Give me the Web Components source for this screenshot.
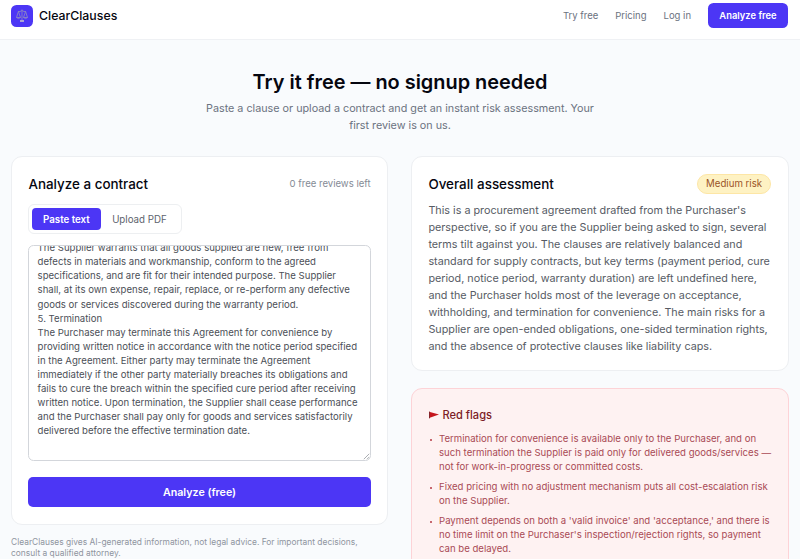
<!DOCTYPE html>
<html lang="en">
<head>
<meta charset="utf-8">
<title>ClearClauses</title>
<style>
  body {
    margin: 0;
    height: 559px;
    overflow: hidden;
    background: #f9fbfd;
    color: #05060f;
    font-family: Inter, 'Liberation Sans', sans-serif;
    --brand: #4c36f5;
    --muted: #6b7280;
  }

  main {
    box-sizing: border-box;
    height: 519px;
    overflow: hidden;
    padding: 30px 11px 0;
  }

  .columns {
    display: grid;
    grid-template-columns: 377px 378px;
    gap: 23px;
    align-items: start;
    margin-top: 22px;
  }

  .column {
    display: grid;
    gap: 17px;
  }
</style>
</head>
<body>
<site-header>
  <nav-link>Try free</nav-link>
  <nav-link>Pricing</nav-link>
  <nav-link>Log in</nav-link>
</site-header>

<main>
  <page-hero>
    Try it free — no signup needed
    <span slot="lead">Paste a clause or upload a contract and get an instant risk assessment. Your<br>first review is on us.</span>
  </page-hero>

  <div class="columns">
    <div>
      <panel-card>
        <span slot="title">Analyze a contract</span>
        <span slot="aside">0 free reviews left</span>
        <contract-form>The Supplier warrants that all goods supplied are new, free from
defects in materials and workmanship, conform to the agreed
specifications, and are fit for their intended purpose. The Supplier
shall, at its own expense, repair, replace, or re-perform any defective
goods or services discovered during the warranty period.
5. Termination
The Purchaser may terminate this Agreement for convenience by
providing written notice in accordance with the notice period specified
in the Agreement. Either party may terminate the Agreement
immediately if the other party materially breaches its obligations and
fails to cure the breach within the specified cure period after receiving
written notice. Upon termination, the Supplier shall cease performance
and the Purchaser shall pay only for goods and services satisfactorily
delivered before the effective termination date.</contract-form>
      </panel-card>
      <legal-note>ClearClauses gives AI-generated information, not legal advice. For important decisions,<br>consult a qualified attorney.</legal-note>
    </div>

    <div class="column">
      <panel-card>
        <span slot="title">Overall assessment</span>
        <risk-badge slot="aside">Medium risk</risk-badge>
        <assessment-text>This is a procurement agreement drafted from the Purchaser's
perspective, so if you are the Supplier being asked to sign, several
terms tilt against you. The clauses are relatively balanced and
standard for supply contracts, but key terms (payment period, cure
period, notice period, warranty duration) are left undefined here,
and the Purchaser holds most of the leverage on acceptance,
withholding, and termination for convenience. The main risks for a
Supplier are open-ended obligations, one-sided termination rights,
and the absence of protective clauses like liability caps.</assessment-text>
      </panel-card>
      <red-flags>
        <flag-item>Termination for convenience is available only to the Purchaser, and on<br>such termination the Supplier is paid only for delivered goods/services —<br>not for work-in-progress or committed costs.</flag-item>
        <flag-item>Fixed pricing with no adjustment mechanism puts all cost-escalation risk<br>on the Supplier.</flag-item>
        <flag-item>Payment depends on both a 'valid invoice' and 'acceptance,' and there is<br>no time limit on the Purchaser's inspection/rejection rights, so payment<br>can be delayed.</flag-item>
      </red-flags>
    </div>
  </div>
</main>

<script>
  // every element only needs a shadow root filled from its markup
  function define(name, markup) {
    const template = document.createElement('template');
    template.innerHTML = markup;

    customElements.define(name, class extends HTMLElement {
      constructor() {
        super();
        this.attachShadow({ mode: 'open' }).appendChild(template.content.cloneNode(true));
      }
    });
  }

  define('brand-logo', `
    <style>
      :host {
        display: flex;
        align-items: center;
        gap: 6px;
        font-size: 12.32px;
        font-weight: 500;
      }
      .mark {
        display: grid;
        place-items: center;
        width: 22px;
        height: 22px;
        border-radius: 5.5px;
        background: var(--brand);
      }
    </style>
    <span class="mark">
      <svg width="14" height="16" viewBox="0 0 14 16" fill="none" stroke="#8a84c4" stroke-width=".9">
        <path d="M3 3.5q2 .6 4-1 2 1.6 4 1M7 1.5v11M3.4 3.5L1.5 9.5h4L3.4 3.5M10.6 3.5L8.5 9.5h4l-1.9-6"/>
        <path d="M1.5 9.5q2 2.2 4 0M8.5 9.5q2 2.2 4 0"/>
        <path d="M5 13h4" stroke="#c9c7c9" stroke-width="1.5"/>
      </svg>
    </span>
    <span>ClearClauses</span>
  `);

  define('nav-link', `
    <style>
      :host {
        color: var(--muted);
        font-size: 9.5px;
      }
    </style>
    <slot></slot>
  `);

  define('site-header', `
    <style>
      :host {
        display: flex;
        align-items: center;
        justify-content: space-between;
        box-sizing: border-box;
        height: 40px;
        padding: 0 12px 8px 11px;
        border-bottom: 1px solid #eff1f4;
        background: #fff;
      }
      nav {
        display: flex;
        align-items: center;
        gap: 17px;
      }
      button {
        height: 25px;
        width: 80px;
        padding: 0;
        border: 0;
        border-radius: 5.5px;
        background: var(--brand);
        color: #fff;
        font: 600 9.4px Inter, sans-serif;
      }
    </style>
    <brand-logo></brand-logo>
    <nav>
      <slot></slot>
      <button>Analyze free</button>
    </nav>
  `);

  define('page-hero', `
    <style>
      :host {
        display: block;
        text-align: center;
      }
      h1 {
        margin: 0;
        font-size: 19.92px;
        font-weight: 600;
        line-height: 24px;
      }
      p {
        margin: 6px 0 0;
        color: var(--muted);
        font-size: 10.77px;
        line-height: 17px;
      }
    </style>
    <h1><slot></slot></h1>
    <p><slot name="lead"></slot></p>
  `);

  define('panel-card', `
    <style>
      :host {
        display: block;
        padding: 16px 16.4px;
        border: 1px solid #edeff2;
        border-radius: 11px;
        background: #fff;
      }
      header {
        display: flex;
        align-items: center;
        justify-content: space-between;
        height: 21px;
      }
      h2 {
        margin: 0;
        font-size: 13.42px;
        font-weight: 500;
      }
      .aside {
        color: #858b96;
        font-size: 9.55px;
      }
    </style>
    <header>
      <h2><slot name="title"></slot></h2>
      <div class="aside"><slot name="aside"></slot></div>
    </header>
    <slot></slot>
  `);

  define('tab-switch', `
    <style>
      :host {
        display: flex;
        box-sizing: border-box;
        width: 153.6px;
        height: 30px;
        padding: 3px 2.5px;
        border: 1px solid #edeff1;
        border-radius: 6px;
      }
      button {
        padding: 0;
        width: 69px;
        border: 0;
        border-radius: 4px;
        background: none;
        color: #5d636d;
        font: 400 9.71px Inter, sans-serif;
      }
      .active {
        background: var(--brand);
        color: #fff;
        font-weight: 600;
      }
      .second {
        width: 77px;
      }
    </style>
    <button class="active">Paste text</button>
    <button class="second">Upload PDF</button>
  `);

  define('contract-form', `
    <style>
      :host {
        display: block;
        padding: 10px 0 .5px;
      }
      /* scrolled to its end, so the text hangs from the bottom edge */
      .field {
        position: relative;
        display: flex;
        flex-direction: column;
        justify-content: flex-end;
        box-sizing: border-box;
        height: 216px;
        margin-top: 11px;
        padding: 0 8.2px 21.5px;
        overflow: hidden;
        border: 1px solid #d3d6db;
        border-radius: 5.5px;
        color: #4b4f57;
        font-size: 9.61px;
        line-height: 14.1px;
        white-space: pre;
      }
      .grip {
        position: absolute;
        right: 0;
        bottom: 0;
      }
      .submit {
        display: block;
        width: 100%;
        height: 30.4px;
        margin: 16px 0 0;
        border: 0;
        border-radius: 5px;
        background: var(--brand);
        color: #fff;
        font: 600 10.7px Inter, sans-serif;
      }
    </style>
    <tab-switch></tab-switch>
    <div class="field">
      <div><slot></slot></div>
      <svg class="grip" width="7" height="7" viewBox="0 0 7 7" stroke="#85898f" stroke-width=".7">
        <path d="M.8 6.2L6.2.8M4 6.2L6.2 4"/>
      </svg>
    </div>
    <button class="submit">Analyze (free)</button>
  `);

  define('legal-note', `
    <style>
      :host {
        display: block;
        margin-top: 12.3px;
        color: #8f959f;
        font-size: 8.41px;
        line-height: 11.2px;
      }
    </style>
    <slot></slot>
  `);

  define('risk-badge', `
    <style>
      :host {
        display: grid;
        place-items: center;
        box-sizing: border-box;
        width: 74px;
        height: 20px;
        margin-right: .5px;
        border: 1px solid #fde6a6;
        border-radius: 10px;
        background: #fef2c3;
        color: #9a5226;
        font-size: 9.67px;
        font-weight: 400;
      }
    </style>
    <slot></slot>
  `);

  define('assessment-text', `
    <style>
      :host {
        display: block;
        padding-top: 9px;
        margin-bottom: -1px;
        color: #565b64;
        font-size: 10.79px;
        line-height: 16.93px;
      }
      slot {
        white-space: pre;
      }
    </style>
    <slot></slot>
  `);

  define('flag-item', `
    <style>
      :host {
        display: grid;
        grid-template-columns: 10.5px 1fr;
        color: #a94a55;
        font-size: 9.6px;
        line-height: 14.1px;
        white-space: nowrap;
      }
      .dot::before {
        content: '';
        display: block;
        width: 2px;
        height: 2px;
        margin: 7px 0 0 1px;
        border-radius: 50%;
        background: #b43a45;
      }
    </style>
    <span class="dot"></span>
    <span><slot></slot></span>
  `);

  define('red-flags', `
    <style>
      :host {
        display: block;
        height: 240px;
        box-sizing: border-box;
        padding: 18px 16.5px;
        border: 1px solid #fdd3d7;
        border-radius: 11px;
        background: #fef2f2;
      }
      h3 {
        display: flex;
        align-items: center;
        gap: 4px;
        height: 16px;
        margin: 0 0 8.8px;
        color: #7c1d26;
        font-size: 11.1px;
        font-weight: 500;
      }
      .items {
        display: grid;
        gap: 5.6px;
      }
    </style>
    <h3>
      <svg width="10" height="8" viewBox="0 0 10 8">
        <path d="M0 .7L10 3.6 0 7z" fill="#c5161d"/>
        <path d="M.5.7V7.3" stroke="#86252b"/>
      </svg>
      <span>Red flags</span>
    </h3>
    <div class="items"><slot></slot></div>
  `);
</script>
</body>
</html>
